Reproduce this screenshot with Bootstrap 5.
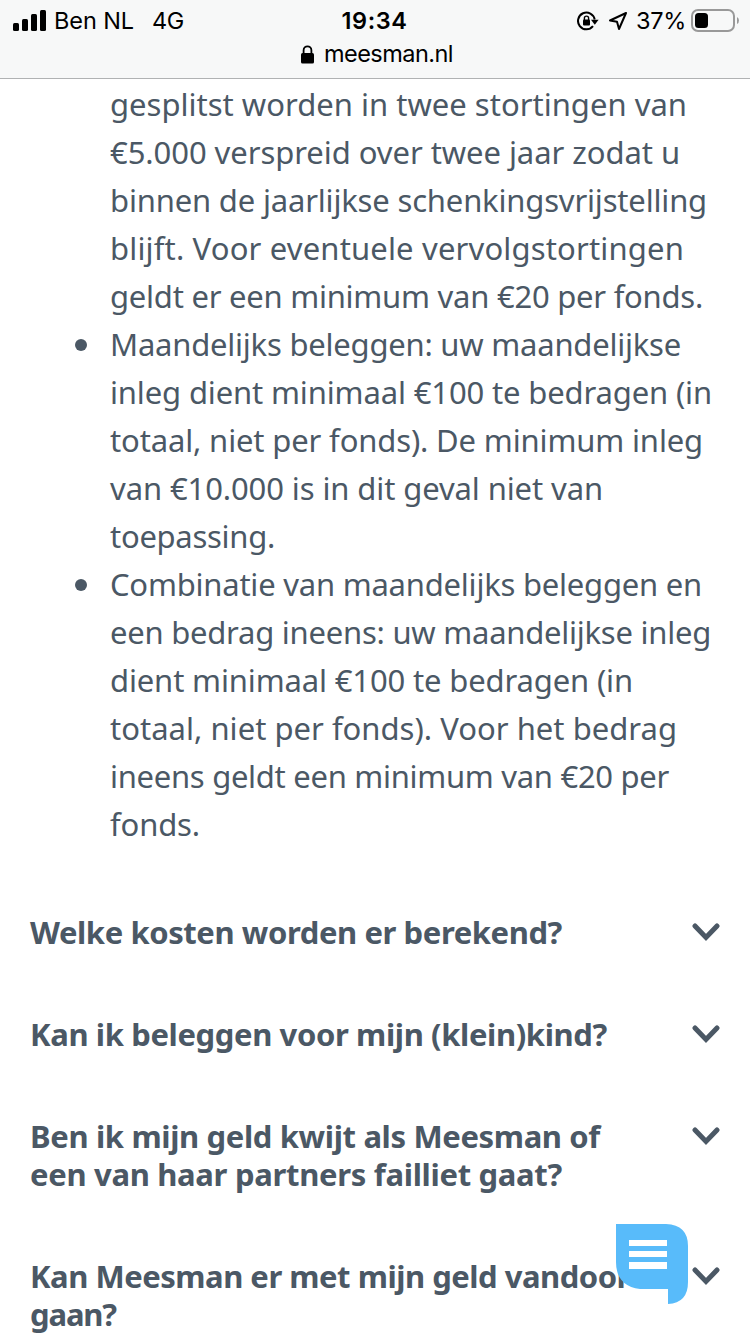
<!DOCTYPE html>
<html lang="nl">
<head>
<meta charset="utf-8">
<meta name="viewport" content="width=device-width, initial-scale=1">
<title>Meesman</title>
<link href="https://cdn.jsdelivr.net/npm/bootstrap@5.3.0/dist/css/bootstrap.min.css" rel="stylesheet">
<style>
  body { height: 1334px; overflow: hidden; background: #fff; color: #4b5865; font-family: "Noto Sans", sans-serif; font-size: 31px; line-height: 48px; }
  .topbar { height: 79px; background: #f7f8f8; border-bottom: 1px solid #b0b2b3; color: #000; font-family: Inter, sans-serif; font-size: 23.5px; line-height: 30px; padding-top: 6px; }
  .status { height: 30px; display: grid; grid-template-columns: 1fr auto 1fr; padding: 0 11px 0 13px; }
  .status > .fit { margin: 0 3px 0 0; }
  .address { height: 36px; padding-left: 4px; }
  .carrier { margin-left: 7px; }
  .network { margin-left: 18px; }
  .location { margin-left: 9px; }
  .percent { margin-left: 8px; }
  .battery { margin-left: 5px; }
  .host { margin-left: 10px; }
  .fit { display: inline-block; white-space: nowrap; }
  .answer { padding: 1px 30px 0 110px; height: 802px; }
  .answer li { position: relative; }
  .answer li.dot::before { content: ""; position: absolute; left: -35px; top: 19px; width: 12px; height: 12px; border-radius: 50%; background: #4b5865; }
  .answer .fit, .question .fit { display: table; }
  .question { padding: 32px 30px; font-weight: 700; line-height: 38px; }
  .chat { position: absolute; left: 616px; top: 1224px; }
</style>
</head>
<body>
<header class="topbar">
  <div class="status">
    <div class="d-flex align-items-center">
      <svg width="34" height="22" viewBox="0 0 34 22"><rect y="13" width="6" height="8" rx="1.5"/><rect x="9" y="9" width="6" height="12" rx="1.5"/><rect x="18" y="4" width="6" height="17" rx="1.5"/><rect x="27" width="6" height="21" rx="1.5"/></svg>
      <span class="fit carrier" data-w="80">Ben NL</span>
      <span class="fit network" data-w="32">4G</span>
    </div>
    <span class="fit fw-semibold" data-w="66">19:34</span>
    <div class="d-flex align-items-center justify-content-end">
      <svg width="22" height="20" viewBox="0 0 22 20" fill="none" stroke="#000" stroke-width="2"><path d="M16 15.2A8.400 8.400 0 1 1 17.700 8.500"/><path d="M14 8.700h7.600l-3.800 5z" fill="#000" stroke="none"/><rect x="6" y="8.500" width="7" height="6" rx="1" fill="#000" stroke="none"/><path d="M7.400 9V7.200a2.100 2.100 0 0 1 4.200 0V9" stroke-width="1.400"/></svg>
      <svg class="location" width="20" height="20" viewBox="0 0 20 20" fill="none" stroke="#000" stroke-width="2" stroke-linejoin="round"><path d="M18 2 2 9.500l7 1.300L11 18z"/></svg>
      <span class="fit percent" data-w="50">37%</span>
      <svg class="battery" width="48" height="24" viewBox="0 0 48 24"><rect x="1" y="1" width="42" height="21" rx="6" fill="none" stroke="#999" stroke-width="2"/><rect x="4" y="4" width="13" height="15" rx="3.500"/><path d="M46 8q2 1 2 3.500T46 15z" fill="#999"/></svg>
    </div>
  </div>
  <div class="address d-flex align-items-center justify-content-center">
    <svg width="13" height="19" viewBox="0 0 13 19"><rect y="8" width="13" height="10.500" rx="1.600"/><path d="M2.600 9V5.200a3.900 3.900 0 0 1 7.800 0V9" fill="none" stroke="#000" stroke-width="1.800"/></svg>
    <span class="fit host" data-w="129">meesman.nl</span>
  </div>
</header>
<main>
  <ul class="answer list-unstyled m-0">
    <li>
      <span class="fit" data-w="577">gesplitst worden in twee stortingen van</span>
      <span class="fit" data-w="570">€5.000 verspreid over twee jaar zodat u</span>
      <span class="fit" data-w="597">binnen de jaarlijkse schenkingsvrijstelling</span>
      <span class="fit" data-w="574">blijft. Voor eventuele vervolgstortingen</span>
      <span class="fit" data-w="593">geldt er een minimum van €20 per fonds.</span>
    </li>
    <li class="dot">
      <span class="fit" data-w="571">Maandelijks beleggen: uw maandelijkse</span>
      <span class="fit" data-w="602">inleg dient minimaal €100 te bedragen (in</span>
      <span class="fit" data-w="593">totaal, niet per fonds). De minimum inleg</span>
      <span class="fit" data-w="493">van €10.000 is in dit geval niet van</span>
      <span class="fit" data-w="165">toepassing.</span>
    </li>
    <li class="dot">
      <span class="fit" data-w="592">Combinatie van maandelijks beleggen en</span>
      <span class="fit" data-w="601">een bedrag ineens: uw maandelijkse inleg</span>
      <span class="fit" data-w="523">dient minimaal €100 te bedragen (in</span>
      <span class="fit" data-w="567">totaal, niet per fonds). Voor het bedrag</span>
      <span class="fit" data-w="559">ineens geldt een minimum van €20 per</span>
      <span class="fit" data-w="90">fonds.</span>
    </li>
  </ul>
  <section>
    <div class="question d-flex justify-content-between"><div><span class="fit" data-w="532">Welke kosten worden er berekend?</span></div><svg width="28" height="38" viewBox="0 0 28 38"><path d="m3 13 11 11.500L25 13" fill="none" stroke="#4b5865" stroke-width="5" stroke-linecap="round"/></svg></div>
    <div class="question d-flex justify-content-between"><div><span class="fit" data-w="577">Kan ik beleggen voor mijn (klein)kind?</span></div><svg width="28" height="38" viewBox="0 0 28 38"><path d="m3 13 11 11.500L25 13" fill="none" stroke="#4b5865" stroke-width="5" stroke-linecap="round"/></svg></div>
    <div class="question d-flex justify-content-between"><div><span class="fit" data-w="570">Ben ik mijn geld kwijt als Meesman of</span><span class="fit" data-w="532">een van haar partners failliet gaat?</span></div><svg width="28" height="38" viewBox="0 0 28 38"><path d="m3 13 11 11.500L25 13" fill="none" stroke="#4b5865" stroke-width="5" stroke-linecap="round"/></svg></div>
    <div class="question d-flex justify-content-between"><div><span class="fit" data-w="600">Kan Meesman er met mijn geld vandoor</span><span class="fit" data-w="86">gaan?</span></div><svg width="28" height="38" viewBox="0 0 28 38"><path d="m3 13 11 11.500L25 13" fill="none" stroke="#4b5865" stroke-width="5" stroke-linecap="round"/></svg></div>
  </section>
</main>
<svg class="chat" width="73" height="80" viewBox="0 0 73 80"><path d="M0 0H50Q72 1 72 22V58Q72 79 52 80V65H24Q0 62 0 38Z" fill="#58bbfa"/><path d="M13 16H51v6H13zM13 27H51v6H13zM13 38H51v7H13z" fill="#fff"/></svg>
<script src="https://cdn.jsdelivr.net/npm/bootstrap@5.3.0/dist/js/bootstrap.bundle.min.js"></script>
<script>
  // Track each line of text to its measure.
  document.querySelectorAll('.fit').forEach(function (el) {
    var gap = (el.dataset.w - el.getBoundingClientRect().width) / el.textContent.length;
    el.style.letterSpacing = gap + 'px';
  });
</script>
</body>
</html>
